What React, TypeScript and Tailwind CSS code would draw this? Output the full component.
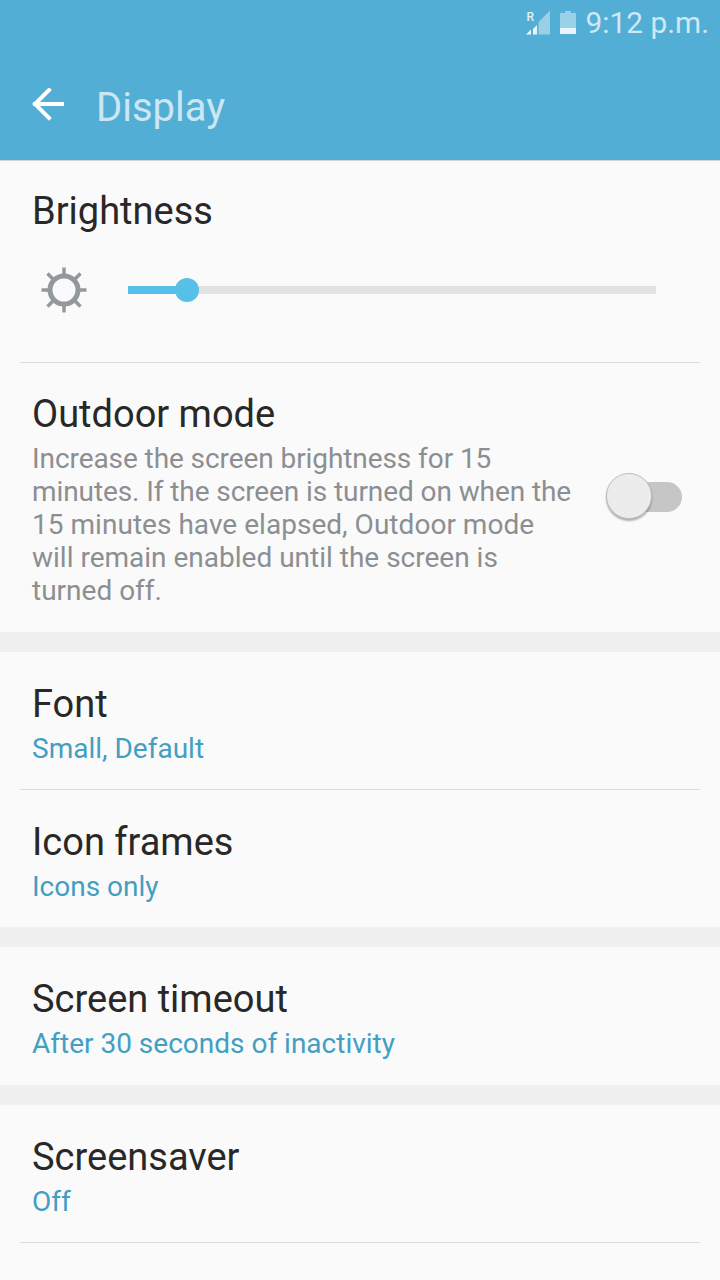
import React from "react";

function Divider() {
  return <div className="mx-5 h-px bg-[#dcdcdc]" />;
}

function Item({ title, sub, h }: { title: string; sub: string; h: string }) {
  return (
    <div className={`${h} px-8 flex flex-col`}>
      <div className="mt-[30px] text-[38px] leading-[44px] text-[#282828]">{title}</div>
      <div className="text-[28px] leading-[33px] text-[#429fc2] mt-[6px]">{sub}</div>
    </div>
  );
}

export default function App() {
  return (
    <div className="w-[720px] h-[1280px] overflow-hidden bg-[#fafafa] flex flex-col" style={{ fontFamily: "Roboto, sans-serif" }}>
      <header className="h-[161px] shrink-0 bg-[#53aed5] border-b border-[#d4d4d4] flex flex-col">
        <div className="h-[46px] flex items-center justify-end pr-[11px] gap-[10px]">
          <svg width="26" height="26" viewBox="0 0 26 26" className="mr-[-1px]">
            <text x="1.5" y="11" fontSize="12" fontWeight="500" fontFamily="Roboto" fill="#dff0f7">R</text>
            <path d="M1 24.5 L6 24.5 L6 19.5 Z M8 24.5 L12 24.5 L12 15 L8 19 Z" fill="#e8f4f9" />
            <path d="M13.5 24.5 L25 24.5 L25 0.5 L13.5 12 Z" fill="#99d0e6" />
          </svg>
          <svg width="16" height="24" viewBox="0 0 16 24">
            <path d="M5 0 H11 V2 H16 V23 H0 V2 H5 Z" fill="#9ad1e7" />
            <rect x="0" y="17" width="16" height="6" fill="#e8f5fa" />
          </svg>
          <span className="text-[29.8px] leading-none text-[#cfe8f3]">9:12 p.m.</span>
        </div>
        <div className="flex-1 flex items-center pl-[32px] pt-[10px]">
          <svg width="34" height="34" viewBox="0 0 34 34" fill="none" stroke="#fff" strokeWidth="4" strokeLinecap="square" strokeLinejoin="miter" className="mt-[-6px]">
            <path d="M30 16 H3" />
            <path d="M17 2 L3 16 L17 30" />
          </svg>
          <span className="ml-[30px] text-[40px] leading-none text-[#cbe7f3]">Display</span>
        </div>
      </header>

      <section className="h-[471px] shrink-0 flex flex-col">
        <div className="h-[201px] shrink-0 px-8 pt-[28px]">
          <div className="text-[38px] leading-[44px] text-[#282828]">Brightness</div>
          <div className="mt-[33px] flex items-center">
            <svg width="48" height="48" viewBox="0 0 48 48" fill="none" stroke="#93999b" className="ml-[8px]">
              <circle cx="24" cy="24" r="14" strokeWidth="5" />
              <path d="M24 1.5 V10 M24 38 V46.5 M1.5 24 H10 M38 24 H46.5 M7.5 7.5 L14 14 M40.5 7.5 L34 14 M7.5 40.5 L14 34 M40.5 40.5 L34 34" strokeWidth="3.5" />
            </svg>
            <div className="relative ml-[40px] w-[528px] h-[8px] bg-[#e2e2e0]">
              <div className="w-[59px] h-full bg-[#56c0e8]" />
              <div className="absolute left-[47px] top-[-8px] w-6 h-6 rounded-full bg-[#56c0e8]" />
            </div>
          </div>
        </div>
        <Divider />
        <div className="flex-1 px-8 pt-[29px] flex items-start">
          <div className="w-[545px] shrink-0">
            <div className="text-[38px] leading-[44px] text-[#282828]">Outdoor mode</div>
            <div className="text-[28px] leading-[33px] text-[#8c8f91] mt-[6px]">
              <div className="tracking-[-0.08px]">Increase the screen brightness for 15</div>
              <div className="tracking-[-0.09px]">minutes. If the screen is turned on when the</div>
              <div className="tracking-[0.03px]">15 minutes have elapsed, Outdoor mode</div>
              <div>will remain enabled until the screen is</div>
              <div>turned off.</div>
            </div>
          </div>
          <div className="relative ml-[30px] mt-[90px] w-[75px] h-[30px] rounded-full bg-[#c6c6c6]">
            <div className="absolute left-[-1px] top-[-9px] w-[46px] h-[46px] rounded-full bg-[#ececec] border border-[#bdbdbd] shadow-[0_2px_2px_rgba(0,0,0,0.3)]" />
          </div>
        </div>
      </section>

      <div className="h-5 shrink-0 bg-[#f0f0f0]" />
      <section className="h-[275px] shrink-0 flex flex-col">
        <Item title="Font" sub="Small, Default" h="h-[137px]" />
        <Divider />
        <Item title="Icon frames" sub="Icons only" h="h-[137px]" />
      </section>
      <div className="h-5 shrink-0 bg-[#f0f0f0]" />
      <section className="h-[138px] shrink-0">
        <Item title="Screen timeout" sub="After 30 seconds of inactivity" h="h-[138px]" />
      </section>
      <div className="h-5 shrink-0 bg-[#f0f0f0]" />
      <section className="flex-1">
        <Item title="Screensaver" sub="Off" h="h-[137px]" />
        <Divider />
      </section>
    </div>
  );
}
